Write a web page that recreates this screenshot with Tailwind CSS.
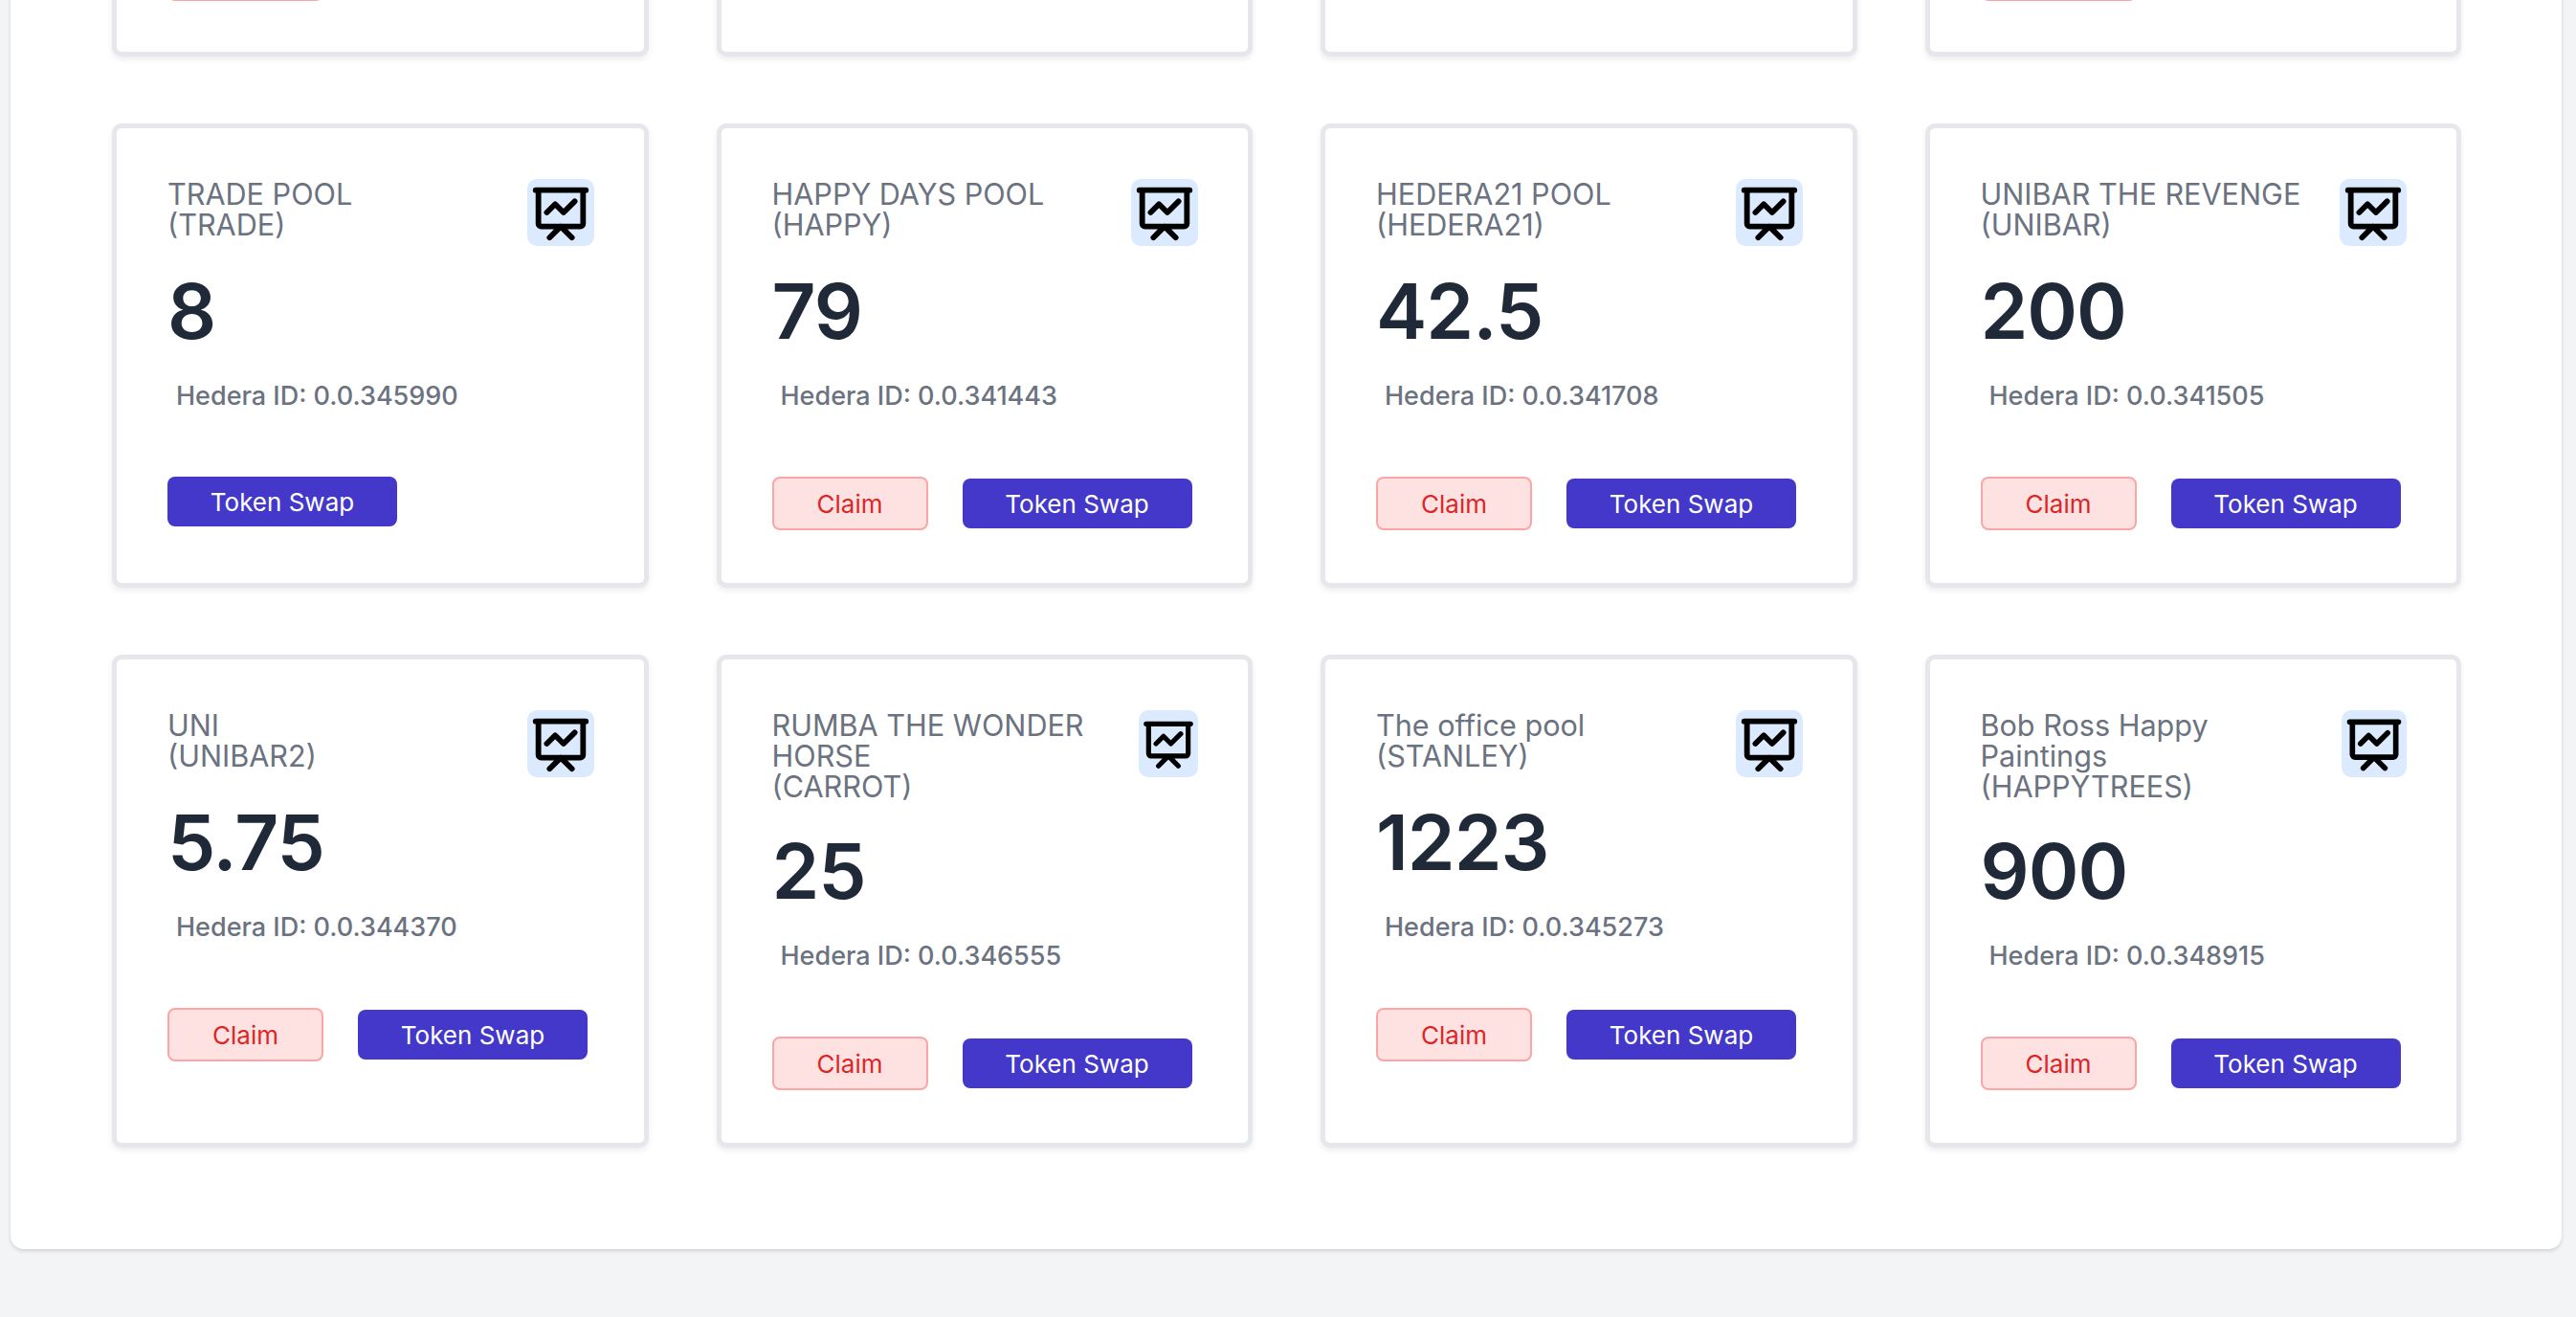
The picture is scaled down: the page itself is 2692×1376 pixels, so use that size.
<!doctype html>
<html lang="en">
<head>
<meta charset="utf-8">
<title>Pools</title>
<script src="https://cdn.jsdelivr.net/npm/@tailwindcss/browser@4"></script>
</head>
<body class="bg-[#f3f4f6] font-['Inter',sans-serif]">
<div class="h-screen overflow-hidden flex flex-col justify-end pb-[71px] pl-[11px] pr-[15px]">
  <main class="shrink-0 bg-white rounded-[14px] shadow-[0_2px_4px_rgba(0,0,0,0.14)] pl-[106px] pr-[105px] pb-[106px] grid grid-cols-4 gap-x-[71px] gap-y-[70px]">

    <div class="h-[200px] flex flex-col justify-end bg-white border-[5px] border-[#e5e7eb] rounded-[10px] shadow-[0_3px_6px_rgba(0,0,0,0.08)] px-[53px] pb-[53px]">
      <div class="h-[56px] w-[163px] border-2 border-[#fca5a5] bg-[#fee2e2] rounded-lg"></div>
    </div>
    <div class="h-[200px] bg-white border-[5px] border-[#e5e7eb] rounded-[10px] shadow-[0_3px_6px_rgba(0,0,0,0.08)]"></div>
    <div class="h-[200px] bg-white border-[5px] border-[#e5e7eb] rounded-[10px] shadow-[0_3px_6px_rgba(0,0,0,0.08)]"></div>
    <div class="h-[200px] flex flex-col justify-end bg-white border-[5px] border-[#e5e7eb] rounded-[10px] shadow-[0_3px_6px_rgba(0,0,0,0.08)] px-[53px] pb-[53px]">
      <div class="h-[56px] w-[163px] border-2 border-[#fca5a5] bg-[#fee2e2] rounded-lg"></div>
    </div>

    <!-- Row 2 -->
    <div class="bg-white border-[5px] border-[#e5e7eb] rounded-[10px] shadow-[0_3px_6px_rgba(0,0,0,0.08)] pt-[53px] pl-[53px] pr-[52px] pb-[55px]">
      <div class="flex justify-between items-start">
        <p class="text-[#6b7280] text-[30.6px] leading-[32px] pb-[4px]">TRADE POOL<br>(TRADE)</p>
        <svg class="w-[70px] h-[70px] shrink-0 bg-[#dbeafe] rounded-[10px]" fill="none" stroke="black" stroke-width="2" stroke-linecap="round" stroke-linejoin="round" viewBox="0 0 24 24"><path d="M7 12l3-3 3 3 4-4M8 21l4-4 4 4M3 4h18M4 4h16v12a1 1 0 01-1 1H5a1 1 0 01-1-1V4z"/></svg>
      </div>
      <p class="text-[#1f2937] text-[80px] font-semibold leading-[136px] tracking-[-1px]">8</p>
      <p class="text-[#6b7280] text-[27px] font-medium leading-[42px] pl-[9px]">Hedera ID: 0.0.345990</p>
      <div class="flex items-center gap-[36px] mt-[63px]">
        <button class="w-[240px] h-[52px] bg-[#4338ca] text-white text-[26px] rounded-lg">Token Swap</button>
      </div>
    </div>

    <div class="bg-white border-[5px] border-[#e5e7eb] rounded-[10px] shadow-[0_3px_6px_rgba(0,0,0,0.08)] pt-[53px] pl-[53px] pr-[52px] pb-[55px]">
      <div class="flex justify-between items-start">
        <p class="text-[#6b7280] text-[30.6px] leading-[32px] pb-[4px]">HAPPY DAYS POOL<br>(HAPPY)</p>
        <svg class="w-[70px] h-[70px] shrink-0 bg-[#dbeafe] rounded-[10px]" fill="none" stroke="black" stroke-width="2" stroke-linecap="round" stroke-linejoin="round" viewBox="0 0 24 24"><path d="M7 12l3-3 3 3 4-4M8 21l4-4 4 4M3 4h18M4 4h16v12a1 1 0 01-1 1H5a1 1 0 01-1-1V4z"/></svg>
      </div>
      <p class="text-[#1f2937] text-[80px] font-semibold leading-[136px] tracking-[-1px]">79</p>
      <p class="text-[#6b7280] text-[27px] font-medium leading-[42px] pl-[9px]">Hedera ID: 0.0.341443</p>
      <div class="flex items-center gap-[36px] mt-[63px]">
        <button class="w-[163px] h-[56px] border-2 border-[#fca5a5] bg-[#fee2e2] text-[#dc2626] text-[26px] rounded-lg">Claim</button>
        <button class="w-[240px] h-[52px] bg-[#4338ca] text-white text-[26px] rounded-lg">Token Swap</button>
      </div>
    </div>

    <div class="bg-white border-[5px] border-[#e5e7eb] rounded-[10px] shadow-[0_3px_6px_rgba(0,0,0,0.08)] pt-[53px] pl-[53px] pr-[52px] pb-[55px]">
      <div class="flex justify-between items-start">
        <p class="text-[#6b7280] text-[30.6px] leading-[32px] pb-[4px]">HEDERA21 POOL<br>(HEDERA21)</p>
        <svg class="w-[70px] h-[70px] shrink-0 bg-[#dbeafe] rounded-[10px]" fill="none" stroke="black" stroke-width="2" stroke-linecap="round" stroke-linejoin="round" viewBox="0 0 24 24"><path d="M7 12l3-3 3 3 4-4M8 21l4-4 4 4M3 4h18M4 4h16v12a1 1 0 01-1 1H5a1 1 0 01-1-1V4z"/></svg>
      </div>
      <p class="text-[#1f2937] text-[80px] font-semibold leading-[136px] tracking-[-1px]">42.5</p>
      <p class="text-[#6b7280] text-[27px] font-medium leading-[42px] pl-[9px]">Hedera ID: 0.0.341708</p>
      <div class="flex items-center gap-[36px] mt-[63px]">
        <button class="w-[163px] h-[56px] border-2 border-[#fca5a5] bg-[#fee2e2] text-[#dc2626] text-[26px] rounded-lg">Claim</button>
        <button class="w-[240px] h-[52px] bg-[#4338ca] text-white text-[26px] rounded-lg">Token Swap</button>
      </div>
    </div>

    <div class="bg-white border-[5px] border-[#e5e7eb] rounded-[10px] shadow-[0_3px_6px_rgba(0,0,0,0.08)] pt-[53px] pl-[53px] pr-[52px] pb-[55px]">
      <div class="flex justify-between items-start">
        <p class="text-[#6b7280] text-[30.6px] leading-[32px] pb-[4px]">UNIBAR THE REVENGE<br>(UNIBAR)</p>
        <svg class="w-[70px] h-[70px] shrink-0 bg-[#dbeafe] rounded-[10px]" fill="none" stroke="black" stroke-width="2" stroke-linecap="round" stroke-linejoin="round" viewBox="0 0 24 24"><path d="M7 12l3-3 3 3 4-4M8 21l4-4 4 4M3 4h18M4 4h16v12a1 1 0 01-1 1H5a1 1 0 01-1-1V4z"/></svg>
      </div>
      <p class="text-[#1f2937] text-[80px] font-semibold leading-[136px] tracking-[-1px]">200</p>
      <p class="text-[#6b7280] text-[27px] font-medium leading-[42px] pl-[9px]">Hedera ID: 0.0.341505</p>
      <div class="flex items-center gap-[36px] mt-[63px]">
        <button class="w-[163px] h-[56px] border-2 border-[#fca5a5] bg-[#fee2e2] text-[#dc2626] text-[26px] rounded-lg">Claim</button>
        <button class="w-[240px] h-[52px] bg-[#4338ca] text-white text-[26px] rounded-lg">Token Swap</button>
      </div>
    </div>

    <!-- Row 3 -->
    <div class="bg-white border-[5px] border-[#e5e7eb] rounded-[10px] shadow-[0_3px_6px_rgba(0,0,0,0.08)] pt-[53px] pl-[53px] pr-[52px] pb-[55px]">
      <div class="flex justify-between items-start">
        <p class="text-[#6b7280] text-[30.6px] leading-[32px] pb-[4px]">UNI<br>(UNIBAR2)</p>
        <svg class="w-[70px] h-[70px] shrink-0 bg-[#dbeafe] rounded-[10px]" fill="none" stroke="black" stroke-width="2" stroke-linecap="round" stroke-linejoin="round" viewBox="0 0 24 24"><path d="M7 12l3-3 3 3 4-4M8 21l4-4 4 4M3 4h18M4 4h16v12a1 1 0 01-1 1H5a1 1 0 01-1-1V4z"/></svg>
      </div>
      <p class="text-[#1f2937] text-[80px] font-semibold leading-[136px] tracking-[-1px]">5.75</p>
      <p class="text-[#6b7280] text-[27px] font-medium leading-[42px] pl-[9px]">Hedera ID: 0.0.344370</p>
      <div class="flex items-center gap-[36px] mt-[63px]">
        <button class="w-[163px] h-[56px] border-2 border-[#fca5a5] bg-[#fee2e2] text-[#dc2626] text-[26px] rounded-lg">Claim</button>
        <button class="w-[240px] h-[52px] bg-[#4338ca] text-white text-[26px] rounded-lg">Token Swap</button>
      </div>
    </div>

    <div class="bg-white border-[5px] border-[#e5e7eb] rounded-[10px] shadow-[0_3px_6px_rgba(0,0,0,0.08)] pt-[53px] pl-[53px] pr-[52px] pb-[55px]">
      <div class="flex justify-between items-start">
        <p class="text-[#6b7280] text-[30.6px] leading-[32px] pb-[4px]">RUMBA THE WONDER HORSE<br>(CARROT)</p>
        <svg class="w-[62px] h-[70px] shrink-0 bg-[#dbeafe] rounded-[10px]" fill="none" stroke="black" stroke-width="2" stroke-linecap="round" stroke-linejoin="round" viewBox="0 0 24 24"><path d="M7 12l3-3 3 3 4-4M8 21l4-4 4 4M3 4h18M4 4h16v12a1 1 0 01-1 1H5a1 1 0 01-1-1V4z"/></svg>
      </div>
      <p class="text-[#1f2937] text-[80px] font-semibold leading-[136px] tracking-[-1px]">25</p>
      <p class="text-[#6b7280] text-[27px] font-medium leading-[42px] pl-[9px]">Hedera ID: 0.0.346555</p>
      <div class="flex items-center gap-[36px] mt-[63px]">
        <button class="w-[163px] h-[56px] border-2 border-[#fca5a5] bg-[#fee2e2] text-[#dc2626] text-[26px] rounded-lg">Claim</button>
        <button class="w-[240px] h-[52px] bg-[#4338ca] text-white text-[26px] rounded-lg">Token Swap</button>
      </div>
    </div>

    <div class="bg-white border-[5px] border-[#e5e7eb] rounded-[10px] shadow-[0_3px_6px_rgba(0,0,0,0.08)] pt-[53px] pl-[53px] pr-[52px] pb-[55px]">
      <div class="flex justify-between items-start">
        <p class="text-[#6b7280] text-[30.6px] leading-[32px] pb-[4px]">The office pool<br>(STANLEY)</p>
        <svg class="w-[70px] h-[70px] shrink-0 bg-[#dbeafe] rounded-[10px]" fill="none" stroke="black" stroke-width="2" stroke-linecap="round" stroke-linejoin="round" viewBox="0 0 24 24"><path d="M7 12l3-3 3 3 4-4M8 21l4-4 4 4M3 4h18M4 4h16v12a1 1 0 01-1 1H5a1 1 0 01-1-1V4z"/></svg>
      </div>
      <p class="text-[#1f2937] text-[80px] font-semibold leading-[136px] tracking-[-1px]">1223</p>
      <p class="text-[#6b7280] text-[27px] font-medium leading-[42px] pl-[9px]">Hedera ID: 0.0.345273</p>
      <div class="flex items-center gap-[36px] mt-[63px]">
        <button class="w-[163px] h-[56px] border-2 border-[#fca5a5] bg-[#fee2e2] text-[#dc2626] text-[26px] rounded-lg">Claim</button>
        <button class="w-[240px] h-[52px] bg-[#4338ca] text-white text-[26px] rounded-lg">Token Swap</button>
      </div>
    </div>

    <div class="bg-white border-[5px] border-[#e5e7eb] rounded-[10px] shadow-[0_3px_6px_rgba(0,0,0,0.08)] pt-[53px] pl-[53px] pr-[52px] pb-[55px]">
      <div class="flex justify-between items-start">
        <p class="text-[#6b7280] text-[30.6px] leading-[32px] pb-[4px]">Bob Ross Happy Paintings<br>(HAPPYTREES)</p>
        <svg class="w-[68px] h-[70px] shrink-0 bg-[#dbeafe] rounded-[10px]" fill="none" stroke="black" stroke-width="2" stroke-linecap="round" stroke-linejoin="round" viewBox="0 0 24 24"><path d="M7 12l3-3 3 3 4-4M8 21l4-4 4 4M3 4h18M4 4h16v12a1 1 0 01-1 1H5a1 1 0 01-1-1V4z"/></svg>
      </div>
      <p class="text-[#1f2937] text-[80px] font-semibold leading-[136px] tracking-[-1px]">900</p>
      <p class="text-[#6b7280] text-[27px] font-medium leading-[42px] pl-[9px]">Hedera ID: 0.0.348915</p>
      <div class="flex items-center gap-[36px] mt-[63px]">
        <button class="w-[163px] h-[56px] border-2 border-[#fca5a5] bg-[#fee2e2] text-[#dc2626] text-[26px] rounded-lg">Claim</button>
        <button class="w-[240px] h-[52px] bg-[#4338ca] text-white text-[26px] rounded-lg">Token Swap</button>
      </div>
    </div>

  </main>
</div>
</body>
</html>
